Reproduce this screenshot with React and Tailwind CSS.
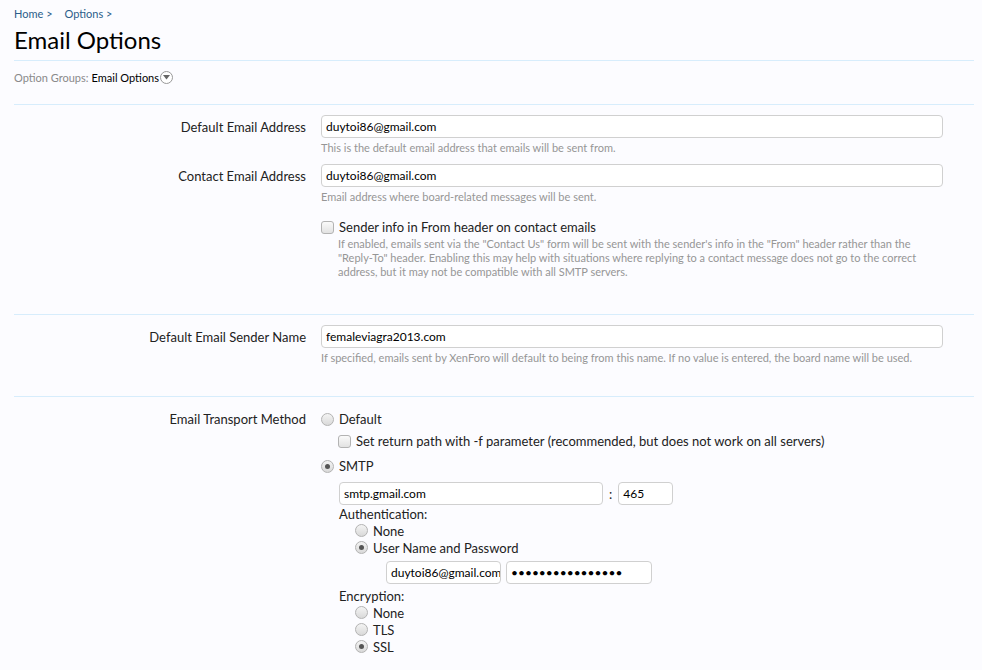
import React from 'react'

const font = { fontFamily: '"Lato", "Liberation Sans", sans-serif' }

function Radio({ checked }) {
  return (
    <span className="inline-flex w-[13px] h-[13px] shrink-0 items-center justify-center rounded-full border border-[#b3b3b3] bg-gradient-to-b from-[#f4f4f4] to-[#d9d9d9]">
      {checked && <span className="w-[5px] h-[5px] rounded-full bg-[#555]" />}
    </span>
  )
}

function Check() {
  return <span className="inline-block w-[13px] h-[13px] shrink-0 rounded-[3px] border border-[#b3b3b3] bg-gradient-to-b from-[#fafafa] to-[#e2e2e2]" />
}

function TextBox({ value, className = '' }) {
  return (
    <div className={`h-[23px] flex items-center rounded-[4px] border border-[#d0d0d0] bg-white px-[4px] text-[12px] text-black overflow-hidden whitespace-nowrap ${className}`}>
      {value}
    </div>
  )
}

function Row({ label, children, className = '' }) {
  return (
    <div className={`flex ${className}`}>
      <div className="w-[292px] shrink-0 text-right text-[13px] leading-[16px] text-[#222] pt-[4px]">{label}</div>
      <div className="ml-[15px] w-[622px]">{children}</div>
    </div>
  )
}

function Hint({ children, className = '' }) {
  return <div className={`text-[11px] leading-[14px] text-[#969696] ${className}`}>{children}</div>
}

function Option({ checked, label, className = '' }) {
  return (
    <div className={`flex items-center gap-[5px] h-[17px] ${className}`}>
      <Radio checked={checked} />
      <span>{label}</span>
    </div>
  )
}

export default function App() {
  return (
    <div className="min-h-[670px] bg-[#fcfcff] px-[14px] pt-[7px] leading-[16px]" style={font}>
      <div className="text-[11px] text-[#2b5d8a] flex gap-[12px] h-[14px] leading-[14px]">
        <span>Home &gt;</span>
        <span>Options &gt;</span>
      </div>
      <h1 className="text-[24px] leading-[30px] text-black mt-[4px] mb-[5px]">Email Options</h1>
      <div className="border-t border-[#d7edfc] w-[960px]" />
      <div className="h-[33px] flex items-center text-[11px]">
        <span className="text-[#8a8a8a]">Option Groups:</span>
        <span className="text-black ml-[3px]">Email Options</span>
        <span className="ml-[1px] inline-flex w-[13px] h-[13px] items-center justify-center rounded-full border border-[#999] bg-white">
          <svg width="7" height="5" viewBox="0 0 7 5"><path d="M0 0h7L3.5 4.5z" fill="#666" /></svg>
        </span>
      </div>
      <div className="border-t border-[#d7edfc] w-[960px] mt-[10px]" />

      <div className="pt-[10px] pb-[35px]">
        <Row label="Default Email Address">
          <TextBox value="duytoi86@gmail.com" />
          <Hint className="mt-[3px]">This is the default email address that emails will be sent from.</Hint>
        </Row>
        <Row label="Contact Email Address" className="mt-[9px]">
          <TextBox value="duytoi86@gmail.com" />
          <Hint className="mt-[3px]">Email address where board-related messages will be sent.</Hint>
          <div className="mt-[15px] flex items-center gap-[5px] text-[13px] text-[#222] h-[16px]">
            <Check />
            <span>Sender info in From header on contact emails</span>
          </div>
          <Hint className="ml-[17px] mt-[2px] w-[610px]">
            If enabled, emails sent via the "Contact Us" form will be sent with the sender's info in the "From" header rather than the "Reply-To" header. Enabling this may help with situations where replying to a contact message does not go to the correct address, but it may not be compatible with all SMTP servers.
          </Hint>
        </Row>
      </div>
      <div className="border-t border-[#d7edfc] w-[960px]" />

      <div className="pt-[10px] pb-[31px]">
        <Row label="Default Email Sender Name">
          <TextBox value="femaleviagra2013.com" />
          <Hint className="mt-[3px]">If specified, emails sent by XenForo will default to being from this name. If no value is entered, the board name will be used.</Hint>
        </Row>
      </div>
      <div className="border-t border-[#d7edfc] w-[960px]" />

      <div className="pt-[10px]">
        <Row label="Email Transport Method">
          <div className="text-[13px] text-[#222]">
            <div className="flex items-center gap-[5px] h-[18px] mt-[3px]">
              <Radio />
              <span>Default</span>
            </div>
            <div className="flex items-center gap-[5px] h-[18px] ml-[17px] mt-[4px]">
              <Check />
              <span>Set return path with -f parameter (recommended, but does not work on all servers)</span>
            </div>
            <div className="flex items-center gap-[5px] h-[18px] mt-[7px]">
              <Radio checked />
              <span>SMTP</span>
            </div>
            <div className="ml-[18px] mt-[7px]">
              <div className="flex items-center">
                <TextBox value="smtp.gmail.com" className="w-[264px]" />
                <span className="mx-[6px]">:</span>
                <TextBox value="465" className="w-[55px]" />
              </div>
              <div className="leading-[18px]">Authentication:</div>
              <div className="ml-[16px]">
                <Option label="None" className="-mt-[1px]" />
                <Option checked label="User Name and Password" />
                <div className="flex items-center gap-[5px] ml-[31px] mt-[5px]">
                  <TextBox value="duytoi86@gmail.com" className="w-[115px]" />
                  <TextBox value="••••••••••••••••" className="w-[146px]" />
                </div>
              </div>
              <div className="mt-[3px] leading-[18px]">Encryption:</div>
              <div className="ml-[16px]">
                <Option label="None" className="-mt-[1px]" />
                <Option label="TLS" />
                <Option checked label="SSL" />
              </div>
            </div>
          </div>
        </Row>
      </div>
    </div>
  )
}
